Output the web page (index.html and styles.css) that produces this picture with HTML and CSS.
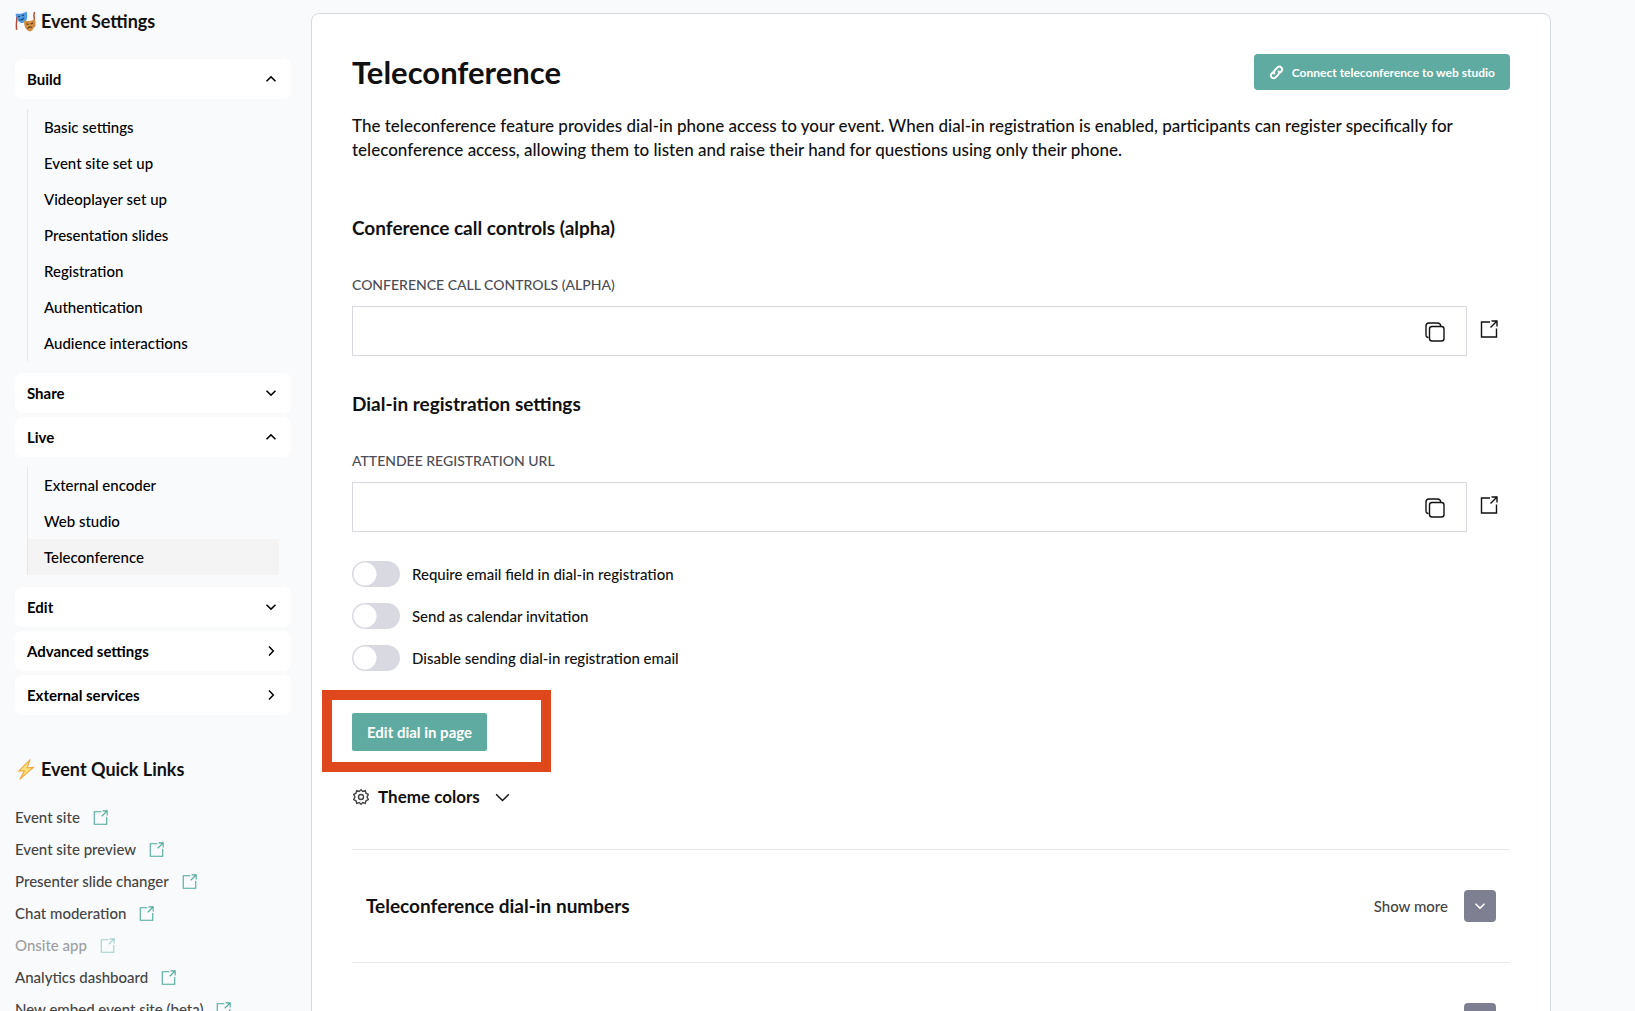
FILE: index.html
```
<!DOCTYPE html>
<html lang="en">
<head>
    <meta charset="UTF-8">
    <meta name="viewport" content="width=device-width, initial-scale=1.0">
    <title>Teleconference</title>
    <link rel="stylesheet" href="styles.css">
</head>
<body>
    <!-- shared icons -->
    <svg class="sprite" aria-hidden="true">
        <symbol id="down" viewBox="0 0 12 12"><path d="M1.5 3.7 6 8.1l4.5-4.4"/></symbol>
        <symbol id="up" viewBox="0 0 12 12"><path d="M1.5 8.2 6 3.9l4.5 4.3"/></symbol>
        <symbol id="right" viewBox="0 0 12 12"><path d="M4 1.5 8.3 6 4 10.5"/></symbol>
        <symbol id="external" viewBox="0 0 18 18"><path d="M10 2H1.5v15h15V8.5M11.5 1H17v5.5M17 1l-6.5 6.5"/></symbol>
        <symbol id="copy" viewBox="0 0 20 20"><path d="M3.5 15.5C1.8 15.5 1 14.500 1 13V4c0-2 1-3 3-3h8.500c2 0 3 1 3.200 3"/><rect x="4.500" y="4.500" width="14.500" height="14.500" rx="2.500"/></symbol>
    </svg>

    <div class="layout">
        <aside class="sidebar">
            <h2 class="side-title">
                <svg class="emoji" viewBox="0 0 20 20" aria-hidden="true">
                    <path d="M1.200 3C3 6 .5 9 1.500 18M18.500 1c-1.500 4 1 7 0 14" fill="none" stroke="#b5483a" stroke-width="1.400"/>
                    <path d="M.8 2.500c3.500.7 7-.3 10.200-2 1.500 5.500.5 9.500-3.500 11C3.500 11.500 1.300 8 .8 2.500z" fill="#4f9be0"/>
                    <path d="M2.800 5.500l2-.5M6.500 4.600l2-.8M4 8.200c1.800.8 3.500 0 4.500-1.800" fill="none" stroke="#16386b"/>
                    <path d="M8.500 9.300c3.500.7 7 .2 10.500-1.500.8 5.500-1 10.500-4.700 11.700-3.700-1-5.800-4.700-5.800-10.200z" fill="#cf8f45"/>
                    <path d="M10.800 12.300l2.200.3M15 12.300l2.200-.8M12 16.700c1-1.700 2.700-2 4.300-.9" fill="none" stroke="#5b3010"/>
                </svg>
                Event Settings
            </h2>
            <nav class="menu">
                <button class="menu-head" type="button">Build <svg class="chevron"><use href="#up"/></svg></button>
                <ul class="submenu">
                    <li><a href="#">Basic settings</a></li>
                    <li><a href="#">Event site set up</a></li>
                    <li><a href="#">Videoplayer set up</a></li>
                    <li><a href="#">Presentation slides</a></li>
                    <li><a href="#">Registration</a></li>
                    <li><a href="#">Authentication</a></li>
                    <li><a href="#">Audience interactions</a></li>
                </ul>
                <button class="menu-head" type="button">Share <svg class="chevron"><use href="#down"/></svg></button>
                <button class="menu-head" type="button">Live <svg class="chevron"><use href="#up"/></svg></button>
                <ul class="submenu">
                    <li><a href="#">External encoder</a></li>
                    <li><a href="#">Web studio</a></li>
                    <li><a class="active" href="#">Teleconference</a></li>
                </ul>
                <button class="menu-head" type="button">Edit <svg class="chevron"><use href="#down"/></svg></button>
                <button class="menu-head" type="button">Advanced settings <svg class="chevron"><use href="#right"/></svg></button>
                <button class="menu-head" type="button">External services <svg class="chevron"><use href="#right"/></svg></button>
            </nav>

            <h2 class="side-title">
                <svg class="emoji" viewBox="0 0 20 20" aria-hidden="true">
                    <path d="M14.500.5 3.500 11.500l5.500-.3L4.500 19.500 17.500 8l-6 .3z" fill="#fde07a" stroke="#eda63e"/>
                </svg>
                Event Quick Links
            </h2>
            <ul class="quick-links">
                <li><a href="#">Event site <svg class="link-icon"><use href="#external"/></svg></a></li>
                <li><a href="#">Event site preview <svg class="link-icon"><use href="#external"/></svg></a></li>
                <li><a href="#">Presenter slide changer <svg class="link-icon"><use href="#external"/></svg></a></li>
                <li><a href="#">Chat moderation <svg class="link-icon"><use href="#external"/></svg></a></li>
                <li><a class="disabled" href="#">Onsite app <svg class="link-icon"><use href="#external"/></svg></a></li>
                <li><a href="#">Analytics dashboard <svg class="link-icon"><use href="#external"/></svg></a></li>
                <li><a href="#">New embed event site (beta) <svg class="link-icon"><use href="#external"/></svg></a></li>
            </ul>
        </aside>

        <main class="panel">
            <header class="panel-header">
                <h1>Teleconference</h1>
                <button class="btn btn-connect" type="button">
                    <svg class="chain" viewBox="0 0 16 16" aria-hidden="true"><path d="M6.2 9.800C4.800 8.400 5 6.800 6.200 5.600l2.700-2.800c1.300-1.300 3-1.300 4.200-.1s1.200 3 0 4.200L11.500 8.500M9.800 6.200c1.400 1.400 1.200 3 0 4.200l-2.700 2.800c-1.300 1.300-3 1.300-4.200.1s-1.200-3 0-4.200L4.500 7.500"/></svg>
                    Connect teleconference to web studio
                </button>
            </header>
            <p class="intro">The teleconference feature provides dial-in phone access to your event. When dial-in registration is enabled, participants can register specifically for teleconference access, allowing them to listen and raise their hand for questions using only their phone.</p>

            <section class="block">
                <h2>Conference call controls (alpha)</h2>
                <label class="field-label" for="controls-url">Conference call controls (alpha)</label>
                <div class="field-row">
                    <div class="field">
                        <input type="text" id="controls-url">
                        <button class="icon-btn" type="button" aria-label="Copy"><svg class="copy-icon"><use href="#copy"/></svg></button>
                    </div>
                    <a class="open-link" href="#" aria-label="Open"><svg class="open-icon"><use href="#external"/></svg></a>
                </div>
            </section>

            <section class="block">
                <h2>Dial-in registration settings</h2>
                <label class="field-label" for="attendee-url">Attendee registration URL</label>
                <div class="field-row">
                    <div class="field">
                        <input type="text" id="attendee-url">
                        <button class="icon-btn" type="button" aria-label="Copy"><svg class="copy-icon"><use href="#copy"/></svg></button>
                    </div>
                    <a class="open-link" href="#" aria-label="Open"><svg class="open-icon"><use href="#external"/></svg></a>
                </div>
            </section>

            <div class="switches">
                <label class="switch"><input type="checkbox"> Require email field in dial-in registration</label>
                <label class="switch"><input type="checkbox"> Send as calendar invitation</label>
                <label class="switch"><input type="checkbox"> Disable sending dial-in registration email</label>
            </div>

            <div class="highlight">
                <button class="btn btn-edit" type="button">Edit dial in page</button>
            </div>

            <button class="theme-toggle" type="button">
                <svg class="gear" viewBox="0 0 16 16" aria-hidden="true"><path d="M8 .8 9.800 2.500l2.500-.8.7 2.500 2.300 1.300L14 8l1.300 2.500-2.300 1.300-.7 2.500-2.500-.8L8 15.200l-1.800-1.700-2.500.8-.7-2.500-2.300-1.300L2 8 .7 5.500 3 4.200l.7-2.500 2.500.8z"/><circle cx="8" cy="8" r="2.500"/></svg>
                Theme colors
                <svg class="theme-chevron"><use href="#down"/></svg>
            </button>

            <section class="fold">
                <h2>Teleconference dial-in numbers</h2>
                <span class="more">Show more</span>
                <button class="fold-btn" type="button" aria-label="Show more"><svg class="chevron"><use href="#down"/></svg></button>
            </section>
            <section class="fold">
                <h2>Advanced teleconference settings</h2>
                <span class="more">Show more</span>
                <button class="fold-btn" type="button" aria-label="Show more"><svg class="chevron"><use href="#down"/></svg></button>
            </section>
        </main>
    </div>
</body>
</html>
```
FILE: styles.css
```
* {
    box-sizing: border-box;
}
body {
    margin: 0;
    height: 100vh;
    overflow: hidden;
    background: #f9fafc;
    color: #111;
    font-family: "Lato", sans-serif;
    font-size: 15px;
    font-weight: 500;
}
h1, h2, p, ul {
    margin: 0;
    padding: 0;
}
ul {
    list-style: none;
}
a {
    color: inherit;
    text-decoration: none;
}
button {
    border: none;
    background: none;
    color: inherit;
    font-family: inherit;
    cursor: pointer;
}
svg {
    flex: none;
    fill: none;
    stroke: currentColor;
}
.sprite {
    display: none;
}
.layout {
    display: flex;
    gap: 20px;
    padding: 0 84px 0 15px;
}

/* sidebar */
.sidebar {
    flex: none;
    width: 276px;
}
.side-title {
    display: flex;
    align-items: center;
    gap: 5px;
    padding-top: 9px;
    font-size: 18px;
    line-height: 24px;
    font-weight: 700;
}
.emoji {
    width: 21px;
    height: 21px;
    stroke: none;
}
.menu {
    padding: 26px 0 29px;
}
.menu-head {
    display: flex;
    align-items: center;
    justify-content: space-between;
    width: 100%;
    height: 40px;
    margin-bottom: 4px;
    padding: 0 14px 0 12px;
    border-radius: 8px;
    background: #fff;
    font-size: 15px;
    font-weight: 700;
    color: #000;
}
.chevron {
    width: 12px;
    height: 12px;
    stroke-width: 1.5;
}
.submenu {
    margin: 10px 12px 12px;
    border-left: 1px solid #e5e7ea;
    color: #000;
}
.submenu a {
    display: block;
    padding-left: 16px;
    line-height: 36px;
}
.submenu .active {
    background: #f4f4f4;
}
.quick-links {
    padding-top: 20px;
    color: #444;
}
.quick-links a {
    display: flex;
    align-items: center;
    gap: 13px;
    line-height: 32px;
}
.quick-links .disabled {
    opacity: 0.5;
}
.link-icon {
    width: 15px;
    height: 15px;
    color: #4da898;
    stroke-width: 1.3;
}

/* main panel */
.panel {
    flex: 1;
    min-width: 0;
    margin-top: 13px;
    padding: 40px;
    border: 1px solid #d7d9e0;
    border-radius: 8px;
    background: #fff;
}
.panel-header {
    display: flex;
    align-items: center;
    justify-content: space-between;
    height: 36px;
}
h1 {
    font-size: 31px;
    line-height: 36px;
    font-weight: 700;
}
.btn {
    background: #60aba1;
    color: #fff;
    font-weight: 700;
}
.btn-connect {
    display: flex;
    align-items: center;
    gap: 8px;
    height: 36px;
    padding: 0 15px;
    border-radius: 4px;
    font-size: 12px;
}
.chain {
    width: 15px;
    height: 15px;
    stroke-width: 2;
}
.intro {
    padding: 24px 0 54px;
    font-size: 17px;
    line-height: 24px;
}
.block {
    padding-bottom: 36px;
}
.panel h2 {
    font-size: 19px;
    line-height: 24px;
    font-weight: 700;
}
.field-label {
    display: block;
    padding: 34px 0 10px;
    color: #4c4d55;
    font-size: 14px;
    line-height: 22px;
    text-transform: uppercase;
}
.field-row {
    display: flex;
    align-items: center;
    gap: 13px;
    padding-right: 12px;
}
.field {
    display: flex;
    flex: 1;
    height: 50px;
    border: 1px solid #d7d7e0;
}
.field input {
    flex: 1;
    min-width: 0;
    padding: 0 16px;
    border: none;
    outline: none;
    font: inherit;
}
.icon-btn {
    display: flex;
    align-items: center;
    padding: 2px 21px 0;
}
.copy-icon {
    width: 20px;
    height: 20px;
    stroke-width: 1.4;
}
.open-link {
    display: flex;
    padding-bottom: 4px;
}
.open-icon {
    width: 18px;
    height: 18px;
    stroke-width: 1.4;
}
.switches {
    display: flex;
    flex-direction: column;
    gap: 16px;
    margin-top: -7px;
    padding-bottom: 19px;
}
.switch {
    display: flex;
    align-items: center;
    gap: 12px;
    line-height: 26px;
}
.switch input {
    appearance: none;
    width: 48px;
    height: 26px;
    margin: 0;
    border-radius: 13px;
    background: radial-gradient(circle at 13px 13px, #fff 11px, #d9d9e2 12px);
}
.switch input:checked {
    background: radial-gradient(circle at 35px 13px, #fff 11px, #60aba1 12px);
}
.highlight {
    width: 229px;
    height: 82px;
    margin-left: -30px;
    padding: 13px 20px;
    border: 10px solid #df471d;
}
.btn-edit {
    height: 38px;
    padding: 0 15px;
    border-radius: 2px;
    font-size: 15px;
}
.theme-toggle {
    display: flex;
    align-items: center;
    gap: 9px;
    padding: 13px 0 40px 1px;
    font-size: 17px;
    line-height: 24px;
    font-weight: 700;
}
.gear {
    width: 16px;
    height: 16px;
    stroke: #444;
    stroke-width: 1.4;
}
.theme-chevron {
    width: 17px;
    height: 17px;
    margin-left: 5px;
}
.fold {
    display: flex;
    align-items: center;
    gap: 16px;
    padding: 40px 14px;
    border-top: 1px solid #e8e8e8;
}
.fold h2 {
    flex: 1;
}
.more {
    color: #444;
}
.fold-btn {
    display: flex;
    align-items: center;
    justify-content: center;
    width: 32px;
    height: 32px;
    border-radius: 4px;
    background: #7f7f92;
    color: #fff;
}
```
